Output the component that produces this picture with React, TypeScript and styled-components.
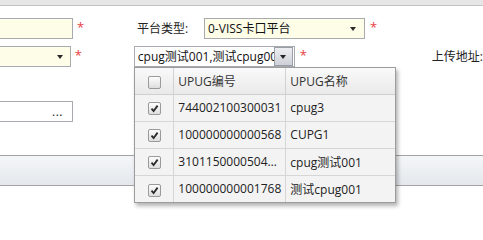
import styled, { createGlobalStyle } from "styled-components";

const GlobalStyle = createGlobalStyle`
  html, body {
    margin: 0;
    padding: 0;
    background: #fff;
  }
  body {
    font-family: "Open Sans", "Noto Sans CJK SC", sans-serif;
    font-size: 12px;
    color: #222;
    overflow: hidden;
  }
`;

const Page = styled.div`
  width: 483px;
  height: 231px;
  overflow: hidden;
`;

const TopStrip = styled.div`
  height: 5px;
  background: #e6e6e6;
  border-bottom: 1px solid #c4c4c4;
`;

const Form = styled.div`
  display: flex;
  flex-direction: column;
  padding-top: 12px;
`;

const Row = styled.div<{ $gap?: number }>`
  display: flex;
  align-items: flex-start;
  height: 21px;
  margin-top: ${(p) => p.$gap ?? 0}px;
`;

const Field = styled.div<{ $w: number; $yellow?: boolean; $cut?: boolean }>`
  position: relative;
  box-sizing: border-box;
  width: ${(p) => p.$w}px;
  height: 21px;
  border: 1px solid #a7abb0;
  border-left: ${(p) => (p.$cut ? "none" : "1px solid #a7abb0")};
  background: ${(p) => (p.$yellow ? "#fefde8" : "#fff")};
  display: flex;
  align-items: center;
  padding: 0 3px;
  line-height: 19px;
  white-space: nowrap;
  overflow: hidden;
`;

const FieldText = styled.span`
  flex: 1;
  overflow: hidden;
  white-space: nowrap;
  color: #111;
`;

const Arrow = styled.span<{ $right: number }>`
  margin-left: auto;
  margin-right: ${(p) => p.$right}px;
  width: 0;
  height: 0;
  border-left: 3.5px solid transparent;
  border-right: 3.5px solid transparent;
  border-top: 4px solid #2a2a2a;
`;

const Dots = styled.span`
  margin-left: auto;
  margin-right: 6px;
  font-size: 12px;
  letter-spacing: 0.5px;
  color: #222;
  line-height: 14px;
`;

const ComboWrap = styled.div`
  position: relative;
`;

const ComboButton = styled.span`
  box-sizing: border-box;
  flex: none;
  width: 19px;
  height: 19px;
  margin-right: -2px;
  border: 1px solid #999ea7;
  background: linear-gradient(#eceef1, #cdd1d8);
  display: flex;
  align-items: center;
  justify-content: center;
`;

const ButtonArrow = styled.span`
  width: 0;
  height: 0;
  border-left: 3px solid transparent;
  border-right: 3px solid transparent;
  border-top: 4px solid #222;
`;

const Star = styled.span<{ $w?: number; $pad: number }>`
  box-sizing: border-box;
  width: ${(p) => (p.$w ? `${p.$w}px` : "auto")};
  padding-left: ${(p) => p.$pad}px;
  padding-top: 1px;
  color: #e8403f;
  font-size: 13px;
  line-height: 16px;
  flex: none;
`;

const Label = styled.span<{ $w?: number; $pad?: number }>`
  box-sizing: border-box;
  width: ${(p) => (p.$w ? `${p.$w}px` : "auto")};
  padding-left: ${(p) => p.$pad ?? 0}px;
  line-height: 21px;
  color: #222;
  white-space: nowrap;
  flex: none;
`;

const Band = styled.div`
  margin-top: 33px;
  height: 29px;
  border-top: 1px solid #a3a3a3;
  border-bottom: 1px solid #a3a3a3;
  background: linear-gradient(#f4f6f8, #e4e8ed);
`;

const Panel = styled.div`
  position: absolute;
  top: 100%;
  left: 0;
  z-index: 5;
  width: 262px;
  box-sizing: border-box;
  border: 1px solid #9c9c9c;
  background: #f3f3f3;
  box-shadow: 2px 3px 4px rgba(0, 0, 0, 0.3);
`;

const Table = styled.table`
  width: 100%;
  border-collapse: collapse;
  table-layout: fixed;
`;

const HeadCell = styled.th<{ $w?: number; $center?: boolean }>`
  box-sizing: border-box;
  width: ${(p) => (p.$w ? `${p.$w}px` : "auto")};
  height: 26px;
  padding: 0 4px;
  text-align: ${(p) => (p.$center ? "center" : "left")};
  font-weight: normal;
  color: #333;
  background: linear-gradient(#f9f9f9, #e9e9e9);
  border-right: 1px solid #d2d2d2;
  border-bottom: 1px solid #d0d0d0;
  &:last-child {
    border-right: none;
  }
`;

const Cell = styled.td<{ $center?: boolean }>`
  box-sizing: border-box;
  height: 27px;
  padding: 0 4px;
  text-align: ${(p) => (p.$center ? "center" : "left")};
  color: #222;
  white-space: nowrap;
  overflow: hidden;
  text-overflow: ellipsis;
  border-right: 1px solid #d6d6d6;
  border-bottom: 1px solid #d6d6d6;
  &:last-child {
    border-right: none;
  }
`;

const BodyRow = styled.tr`
  background: #f3f3f3;
  &:last-child td {
    border-bottom: none;
  }
`;

const Box = styled.span`
  display: inline-flex;
  align-items: center;
  justify-content: center;
  box-sizing: border-box;
  width: 13px;
  height: 13px;
  vertical-align: middle;
  border: 1px solid #9a9a9a;
  border-radius: 2px;
  background: linear-gradient(#fdfdfd, #dedede);
`;

const Check = ({ on }: { on?: boolean }) => (
  <Box>
    {on && (
      <svg width="9" height="9" viewBox="0 0 9 9">
        <path d="M1.5 4.6 L3.6 7 L7.6 1.6" fill="none" stroke="#2b2b2b" strokeWidth="1.8" />
      </svg>
    )}
  </Box>
);

const rows = [
  { code: "744002100300031", name: "cpug3" },
  { code: "100000000000568", name: "CUPG1" },
  { code: "310115000050400012", name: "cpug测试001" },
  { code: "100000000001768", name: "测试cpug001" },
];

export default function App() {
  return (
    <Page>
      <GlobalStyle />
      <TopStrip />
      <Form>
        <Row>
          <Field $w={73} $yellow $cut />
          <Star $w={63} $pad={4}>*</Star>
          <Label $w={68} $pad={1}>平台类型:</Label>
          <Field $w={161} $yellow>
            <FieldText>0-VISS卡口平台</FieldText>
            <Arrow $right={5} />
          </Field>
          <Star $pad={5}>*</Star>
        </Row>
        <Row $gap={7}>
          <Field $w={73} $yellow $cut>
            <Arrow $right={4} />
          </Field>
          <Star $w={63} $pad={4}>*</Star>
          <ComboWrap>
            <Field $w={161}>
              <FieldText>cpug测试001,测试cpug001</FieldText>
              <ComboButton>
                <ButtonArrow />
              </ComboButton>
            </Field>
            <Panel>
              <Table>
                <thead>
                  <tr>
                    <HeadCell $w={39} $center>
                      <Check />
                    </HeadCell>
                    <HeadCell $w={112}>UPUG编号</HeadCell>
                    <HeadCell>UPUG名称</HeadCell>
                  </tr>
                </thead>
                <tbody>
                  {rows.map((r) => (
                    <BodyRow key={r.code}>
                      <Cell $center>
                        <Check on />
                      </Cell>
                      <Cell>{r.code}</Cell>
                      <Cell>{r.name}</Cell>
                    </BodyRow>
                  ))}
                </tbody>
              </Table>
            </Panel>
          </ComboWrap>
          <Star $w={137} $pad={5}>*</Star>
          <Label>上传地址:</Label>
        </Row>
        <Row $gap={34}>
          <Field $w={73} $cut>
            <Dots>...</Dots>
          </Field>
        </Row>
      </Form>
      <Band />
    </Page>
  );
}
